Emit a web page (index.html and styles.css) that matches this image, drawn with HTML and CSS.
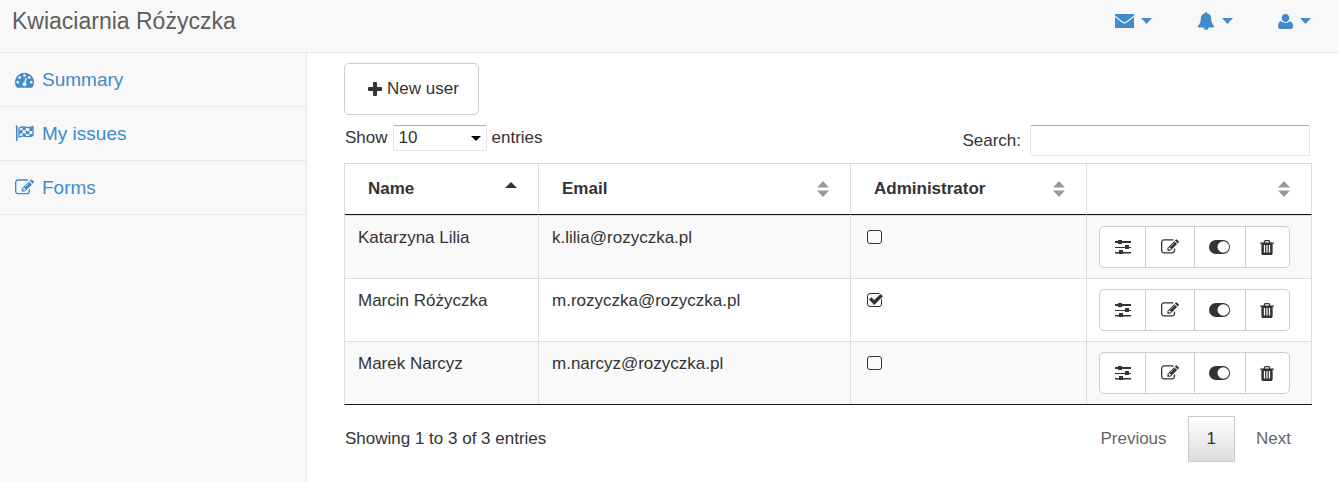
FILE: index.html
```html
<!DOCTYPE html>
<html lang="pl">
<head>
<meta charset="utf-8">
<title>Kwiaciarnia Różyczka</title>
<link rel="stylesheet" href="styles.css">
</head>
<body>
<svg class="sprite" aria-hidden="true">
  <symbol id="dashboard" viewBox="0 0 1792 1792"><path d="M384 1152q0-53-37.500-90.500t-90.500-37.500-90.500 37.500-37.500 90.500 37.500 90.500 90.500 37.500 90.500-37.500 37.500-90.500zm192-448q0-53-37.500-90.500t-90.500-37.500-90.500 37.500-37.500 90.500 37.500 90.500 90.500 37.500 90.500-37.500 37.500-90.500zm428 481l101-382q6-26-7.500-48.500t-38.500-29.500-48 6.500-30 39.500l-101 382q-60 5-107 43.500t-63 98.500q-20 77 20 146t117 89 146-20 89-117q16-60-6-117t-72-91zm660-33q0-53-37.500-90.500t-90.500-37.500-90.500 37.500-37.500 90.500 37.500 90.500 90.500 37.500 90.500-37.500 37.500-90.500zm-640-640q0-53-37.500-90.500t-90.500-37.500-90.500 37.500-37.500 90.500 37.500 90.500 90.500 37.500 90.500-37.500 37.500-90.500zm448 192q0-53-37.500-90.500t-90.500-37.500-90.500 37.500-37.500 90.500 37.500 90.500 90.500 37.500 90.500-37.500 37.500-90.500zm320 448q0 261-141 483-19 29-54 29h-1402q-35 0-54-29-141-221-141-483 0-182 71-348t191-286 286-191 348-71 348 71 286 191 191 286 71 348z"/></symbol>
  <symbol id="flag" viewBox="0 0 19 17"><path d="M1.500.500a1.200 1.200 0 0 1 1 2V16h-1.500V2.500a1.200 1.200 0 0 1 .5-2z"/><path d="M4 3.200C8-.2 11.500 4.500 18 1.700V10.500C12 13.800 9 9 4 12z" fill="none" stroke="currentColor" stroke-width="1.300"/><path d="M7.500 2l3.300.5v3l-3.300-.8zM14.300 3.200l3.500-.8v3.300l-3.500.8zM4.200 5.600l3.300-.9v3.200l-3.300.8zM10.800 5.500l3.500 1v3.100l-3.500-.8zM7.500 7.900l3.300.9v2.500l-3.300-.6zM14.300 9.600l3.500-1v2.500l-3.500.8z"/></symbol>
  <symbol id="edit" viewBox="0 0 1792 1792"><path d="M888 1184l116-116-152-152-116 116v56h96v96h56zm440-720q-16-16-33 1l-350 350q-17 17-1 33t33-1l350-350q17-17 1-33zm80 594v190q0 119-84.500 203.500t-203.500 84.500h-832q-119 0-203.500-84.500t-84.500-203.500v-832q0-119 84.500-203.500t203.500-84.500h832q63 0 117 25 15 7 18 23 3 17-9 29l-49 49q-14 14-32 8-23-6-45-6h-832q-66 0-113 47t-47 113v832q0 66 47 113t113 47h832q66 0 113-47t47-113v-126q0-13 9-22l64-64q15-15 35-7t20 29zm-96-738l288 288-672 672h-288v-288zm444 132l-92 92-288-288 92-92q28-28 68-28t68 28l152 152q28 28 28 68t-28 68z"/></symbol>
  <symbol id="mail" viewBox="0 0 19 14"><path d="M0 0h19v1.600L11 7.700q-1.500 1.100-3 0L0 1.600zM0 3l7.300 5.700q2.200 1.500 4.400 0L19 3v11H0z"/></symbol>
  <symbol id="bell" viewBox="0 0 1792 1792"><path d="M912 1696q0-16-16-16-59 0-101.500-42.500t-42.500-101.500q0-16-16-16t-16 16q0 73 51.500 124.500t124.500 51.500q16 0 16-16zm816-288q0 52-38 90t-90 38h-448q0 106-75 181t-181 75-181-75-75-181h-448q-52 0-90-38t-38-90q50-42 91-88t85-119.500 74.500-158.500 50-206 19.500-260q0-152 117-282.500t307-158.500q-8-19-8-39 0-40 28-68t68-28 68 28 28 68q0 20-8 39 190 28 307 158.500t117 282.500q0 139 19.500 260t50 206 74.500 158.500 85 119.500 91 88z"/></symbol>
  <symbol id="user" viewBox="0 0 15 15"><path d="M7.500 0C10 0 11.300 1.700 11.300 4S9.800 8 7.500 8 3.700 6.300 3.700 4 5 0 7.500 0zM3.200 7.200Q5 9 7.500 9t4.300-1.800Q15 7.600 15 12.500q0 2.500-2.500 2.500h-10Q0 15 0 12.500 0 7.600 3.200 7.200z"/></symbol>
  <symbol id="plus" viewBox="0 0 14 14"><path d="M5 1q0-1 1-1h2q1 0 1 1v4h4q1 0 1 1v2q0 1-1 1H9v4q0 1-1 1H6q-1 0-1-1V9H1Q0 9 0 8V6q0-1 1-1h4z"/></symbol>
  <symbol id="sliders" viewBox="0 0 16 14"><path d="M0 1h16v2H0zM0 7h16v1H0zM0 12h16v1.500H0zM3 0h4v4H3zM10 5h4v4h-4zM4 10h4v4H4z"/></symbol>
  <symbol id="toggle" viewBox="0 0 21 14"><path fill-rule="evenodd" d="M7 0h7a7 7 0 0 1 0 14H7A7 7 0 0 1 7 0zM14.300 1.200a5.800 5.800 0 1 0 0 11.600 5.800 5.800 0 0 0 0-11.600z"/></symbol>
  <symbol id="trash" viewBox="192 128 1408 1536"><path d="M704 1376v-704q0-14-9-23t-23-9h-64q-14 0-23 9t-9 23v704q0 14 9 23t23 9h64q14 0 23-9t9-23zm256 0v-704q0-14-9-23t-23-9h-64q-14 0-23 9t-9 23v704q0 14 9 23t23 9h64q14 0 23-9t9-23zm256 0v-704q0-14-9-23t-23-9h-64q-14 0-23 9t-9 23v704q0 14 9 23t23 9h64q14 0 23-9t9-23zm-544-992h448l-48-117q-7-9-17-11h-317q-10 2-17 11zm928 32v64q0 14-9 23t-23 9h-96v948q0 83-47 143.500t-113 60.500h-832q-66 0-113-58.500t-47-141.500v-952h-96q-14 0-23-9t-9-23v-64q0-14 9-23t23-9h309l70-167q15-37 54-63t79-26h320q40 0 79 26t54 63l70 167h309q14 0 23 9t9 23z"/></symbol>
  <symbol id="caret" viewBox="0 0 12 6" preserveAspectRatio="none"><path d="M0 0h12L6 6z"/></symbol>
  <symbol id="tick" viewBox="-1 -1 16 13"><path d="M0 5.500L2.300 3.200 5.200 6.100 11.500 0 14 2.300 5.200 11z" stroke="#fff" stroke-width="2" paint-order="stroke"/></symbol>
  <symbol id="sort" viewBox="0 0 12 16"><path d="M0 6.500L6 0l6 6.500zM0 9.500h12L6 16z"/></symbol>
  <symbol id="sort-up" viewBox="0 0 12 16"><path d="M0 7l6-6 6 6z"/></symbol>
</svg>

<header class="topbar">
  <a class="brand" href="#">Kwiaciarnia Różyczka</a>
  <nav class="top-menu" aria-label="Account">
    <button type="button" aria-label="Messages"><svg class="icon-mail"><use href="#mail"/></svg><svg class="caret"><use href="#caret"/></svg></button>
    <button type="button" aria-label="Notifications"><svg class="icon-bell"><use href="#bell"/></svg><svg class="caret"><use href="#caret"/></svg></button>
    <button type="button" aria-label="User"><svg class="icon-user"><use href="#user"/></svg><svg class="caret"><use href="#caret"/></svg></button>
  </nav>
</header>

<div class="layout">
  <nav class="sidebar" aria-label="Main">
    <a href="#"><svg><use href="#dashboard"/></svg>Summary</a>
    <a href="#"><svg><use href="#flag"/></svg>My issues</a>
    <a href="#"><svg><use href="#edit"/></svg>Forms</a>
  </nav>

  <main class="content">
    <button type="button" class="new-user"><svg><use href="#plus"/></svg>New user</button>

    <div class="toolbar">
      <div class="length">
        <label for="length">Show</label>
        <span class="select"><select id="length"><option>10</option><option>25</option><option>50</option></select><svg><use href="#caret"/></svg></span>
        <span>entries</span>
      </div>
      <div class="search">
        <label for="search">Search:</label>
        <input type="search" id="search">
      </div>
    </div>

    <table class="users">
      <colgroup><col class="c-name"><col class="c-email"><col class="c-admin"><col class="c-actions"></colgroup>
      <thead>
        <tr>
          <th aria-sort="ascending"><div class="head">Name<svg class="active"><use href="#sort-up"/></svg></div></th>
          <th><div class="head">Email<svg><use href="#sort"/></svg></div></th>
          <th><div class="head">Administrator<svg><use href="#sort"/></svg></div></th>
          <th><div class="head"><svg><use href="#sort"/></svg></div></th>
        </tr>
      </thead>
      <tbody>
        <tr>
          <td>Katarzyna Lilia</td><td>k.lilia@rozyczka.pl</td>
          <td><span class="check"><input type="checkbox" aria-label="Administrator: Katarzyna Lilia"><svg><use href="#tick"/></svg></span></td>
          <td class="actions"><div class="group">
            <button type="button" aria-label="Settings"><svg class="i-sliders"><use href="#sliders"/></svg></button><button type="button" aria-label="Edit"><svg class="i-edit"><use href="#edit"/></svg></button><button type="button" aria-label="Toggle"><svg class="i-toggle"><use href="#toggle"/></svg></button><button type="button" aria-label="Delete"><svg class="i-trash"><use href="#trash"/></svg></button>
          </div></td>
        </tr>
        <tr>
          <td>Marcin Różyczka</td><td>m.rozyczka@rozyczka.pl</td>
          <td><span class="check"><input type="checkbox" checked aria-label="Administrator: Marcin Różyczka"><svg><use href="#tick"/></svg></span></td>
          <td class="actions"><div class="group">
            <button type="button" aria-label="Settings"><svg class="i-sliders"><use href="#sliders"/></svg></button><button type="button" aria-label="Edit"><svg class="i-edit"><use href="#edit"/></svg></button><button type="button" aria-label="Toggle"><svg class="i-toggle"><use href="#toggle"/></svg></button><button type="button" aria-label="Delete"><svg class="i-trash"><use href="#trash"/></svg></button>
          </div></td>
        </tr>
        <tr>
          <td>Marek Narcyz</td><td>m.narcyz@rozyczka.pl</td>
          <td><span class="check"><input type="checkbox" aria-label="Administrator: Marek Narcyz"><svg><use href="#tick"/></svg></span></td>
          <td class="actions"><div class="group">
            <button type="button" aria-label="Settings"><svg class="i-sliders"><use href="#sliders"/></svg></button><button type="button" aria-label="Edit"><svg class="i-edit"><use href="#edit"/></svg></button><button type="button" aria-label="Toggle"><svg class="i-toggle"><use href="#toggle"/></svg></button><button type="button" aria-label="Delete"><svg class="i-trash"><use href="#trash"/></svg></button>
          </div></td>
        </tr>
      </tbody>
    </table>

    <div class="footer">
      <span>Showing 1 to 3 of 3 entries</span>
      <nav class="pager" aria-label="Pages">
        <a href="#">Previous</a><a href="#" class="current" aria-current="page">1</a><a href="#">Next</a>
      </nav>
    </div>
  </main>
</div>
</body>
</html>
```
FILE: styles.css
```css
* {
  box-sizing: border-box;
}

body {
  margin: 0;
  min-height: 100vh;
  display: flex;
  flex-direction: column;
  background: #fff;
  color: #333;
  font: 17px/24px "Liberation Sans", Arial, sans-serif;
}

button,
input,
select {
  font: inherit;
  color: inherit;
}

a {
  color: #428bca;
  text-decoration: none;
}

svg {
  display: block;
  flex: none;
  fill: currentColor;
}

.sprite {
  position: absolute;
  width: 0;
  height: 0;
}

.topbar {
  display: flex;
  justify-content: space-between;
  align-items: flex-start;
  height: 53px;
  padding: 5px 27px 0 12px;
  background: #f8f8f8;
  border-bottom: 1px solid #e7e7e7;
}

.brand {
  color: #5e5e5e;
  font-size: 23px;
  line-height: 32px;
}

.top-menu {
  display: flex;
  gap: 45px;
}

.top-menu button {
  display: flex;
  align-items: center;
  gap: 7px;
  height: 32px;
  padding: 0;
  border: 0;
  background: none;
  color: #428bca;
}

.icon-mail {
  width: 19px;
  height: 14px;
}

.icon-bell {
  width: 18px;
  height: 18px;
}

.icon-user {
  width: 15px;
  height: 15px;
}

.top-menu .caret {
  width: 11px;
  height: 6px;
}

.layout {
  display: flex;
  flex: 1;
}

.sidebar {
  flex: 0 0 307px;
  background: #f8f8f8;
  border-right: 1px solid #e7e7e7;
}

.sidebar a {
  display: flex;
  align-items: center;
  gap: 8px;
  padding: 13px 15px;
  border-bottom: 1px solid #e7e7e7;
  font-size: 19px;
  line-height: 27px;
}

.sidebar svg {
  width: 19px;
  height: 19px;
}

.content {
  flex: 1;
  min-width: 0;
  padding: 10px 26px 0 37px;
}

.new-user {
  display: flex;
  align-items: center;
  gap: 5px;
  height: 52px;
  padding: 0 19px 0 23px;
  background: #fff;
  border: 1px solid #ccc;
  border-radius: 5px;
}

.new-user svg {
  width: 14px;
  height: 14px;
}

.toolbar {
  display: flex;
  justify-content: space-between;
  align-items: flex-start;
  padding: 10px 2px 7px 1px;
}

.length {
  display: flex;
  align-items: center;
  gap: 5px;
}

.select {
  position: relative;
}

.select select {
  appearance: none;
  display: block;
  width: 94px;
  height: 26px;
  padding: 0 5px;
  background: #fff;
  border: 1px solid #e3e3ea;
  border-top-color: #abadb3;
  border-radius: 2px;
}

.select svg {
  position: absolute;
  right: 6px;
  top: 11px;
  width: 10px;
  height: 5px;
  color: #000;
  pointer-events: none;
}

.search {
  display: flex;
  align-items: center;
  gap: 9px;
}

.search input {
  width: 280px;
  height: 31px;
  padding: 0 6px;
  background: #fff;
  border: 1px solid #e3e3ea;
  border-top-color: #abadb3;
  border-radius: 2px;
}

.users {
  width: 100%;
  table-layout: fixed;
  border-collapse: separate;
  border-spacing: 0;
  border-left: 1px solid #ddd;
  border-bottom: 1px solid #111;
}

.c-name { width: 194px; }
.c-email { width: 312px; }
.c-admin { width: 236px; }
.c-actions { width: 225px; }

.users th {
  height: 52px;
  padding: 0 21px 0 23px;
  border: solid #ddd;
  border-width: 1px 1px 0 0;
  border-bottom: 1px solid #111;
  text-align: left;
}

.head {
  display: flex;
  align-items: center;
  justify-content: space-between;
}

.head svg {
  width: 12px;
  height: 16px;
  margin-left: auto;
  color: #999;
}

.head .active {
  color: #333;
}

.users td {
  height: 63px;
  padding: 10px 13px;
  vertical-align: top;
  border: solid #ddd;
  border-width: 1px 1px 0 0;
}

.users tbody tr:nth-child(odd) {
  background: #f9f9f9;
}

.check {
  position: relative;
  display: flex;
  padding: 4px 3px;
}

.check input {
  appearance: none;
  width: 15px;
  height: 14px;
  margin: 0;
  border: 1px solid #333;
  border-radius: 3px;
}

.check svg {
  display: none;
  position: absolute;
  left: 4px;
  top: 4px;
  width: 16px;
  height: 13px;
}

.check input:checked + svg {
  display: block;
}

.users .actions {
  padding: 10px 12px;
}

.group {
  display: flex;
  width: 191px;
  height: 42px;
  background: #fff;
  border: 1px solid #ccc;
  border-radius: 5px;
}

.group button {
  display: flex;
  align-items: center;
  justify-content: center;
  flex: 1 1 auto;
  padding: 0;
  background: none;
  border: 0;
}

.group button + button {
  border-left: 1px solid #ccc;
}

.i-sliders {
  width: 16px;
  height: 14px;
}

.i-edit {
  width: 18px;
  height: 18px;
}

.i-toggle {
  width: 21px;
  height: 14px;
}

.i-trash {
  width: 14px;
  height: 15px;
}

.footer {
  display: flex;
  justify-content: space-between;
  align-items: center;
  padding: 11px 0 11px 1px;
}

.pager {
  display: flex;
  align-items: center;
}

.pager a {
  padding: 10px 21px;
  color: #666;
}

.pager .current {
  padding: 10px 18px;
  color: #333;
  border: 1px solid #cacaca;
  background: linear-gradient(#fff, #dcdcdc);
}
```
